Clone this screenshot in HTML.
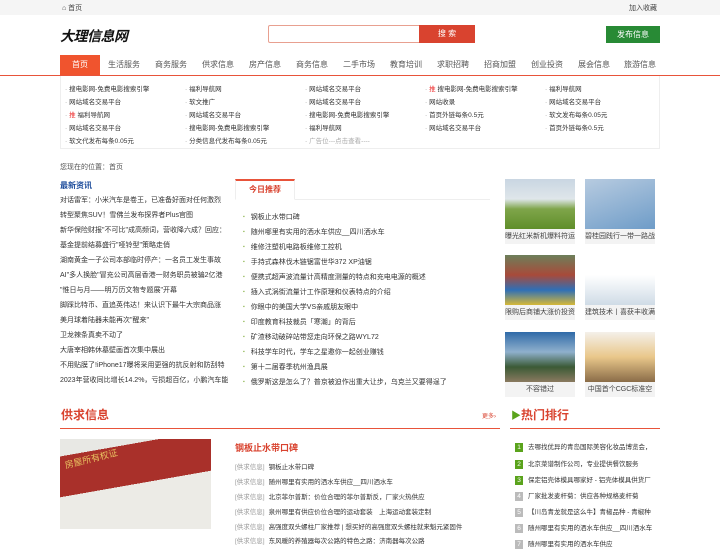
<!DOCTYPE html>
<html><head><meta charset="utf-8"><style>
*{margin:0;padding:0;box-sizing:border-box}
body{width:720px;height:540px;overflow:hidden;background:#fff;font-family:"Liberation Sans","Noto Sans CJK SC",sans-serif;color:#333;font-size:7px;position:relative}
.a{position:absolute;white-space:nowrap}
.top{position:absolute;left:0;top:0;width:720px;height:15px;background:#f5f5f5}
.nav span{position:absolute;top:55px;height:20px;line-height:20px;font-size:8px;color:#555}
.lk div{position:absolute;font-size:6.5px;color:#333}
.lk div:before{content:"·";color:#888;margin-right:2px}
.nl div{position:absolute;left:60px;font-size:7px;color:#333;width:168px;overflow:hidden;white-space:nowrap}
.tl div{position:absolute;left:243px;font-size:7px;color:#333;white-space:nowrap}
.tl div:before{content:"▪";color:#8ab34a;font-size:5px;margin-right:6px;vertical-align:1px}
.pic{position:absolute;width:70px;height:50px}
.cap{position:absolute;width:70px;height:15px;background:#f3f3f3;font-size:7px;text-align:center;line-height:15px;overflow:hidden;white-space:nowrap;color:#444}
.gq div{position:absolute;left:235px;font-size:6.5px;color:#333;white-space:nowrap}
.gq i{font-style:normal;color:#999;margin-right:4px}
.hr div{position:absolute;left:515px;font-size:6.5px;color:#333;white-space:nowrap;width:145px;overflow:hidden}
.hr b{display:inline-block;width:8px;height:9px;color:#fff;text-align:center;line-height:9px;margin-right:5px;font-weight:normal;background:#bbb}
.hr b.g{background:#5aa31c}
</style></head><body>
<div class="top"></div>
<div class="a" style="left:62px;top:3px;font-size:7px;color:#444">⌂ 首页</div>
<div class="a" style="left:629px;top:3px;font-size:7px;color:#444">加入收藏</div>
<div class="a" style="left:60px;top:26px;font-size:14px;font-weight:bold;font-style:italic;color:#111;letter-spacing:-0.5px">大理信息网</div>
<div class="a" style="left:268px;top:25px;width:207px;height:18px;border:1px solid #e8a090;border-radius:2px"></div>
<div class="a" style="left:419px;top:25px;width:56px;height:18px;background:#d9432f;color:#fff;font-size:8px;text-align:center;line-height:18px">搜 索</div>
<div class="a" style="left:606px;top:26px;width:54px;height:17px;background:#288a35;color:#fff;font-size:8px;text-align:center;line-height:17px">发布信息</div>
<div class="a" style="left:0;top:75px;width:720px;height:1px;background:#e8533a"></div>
<div class="a" style="left:60px;top:55px;width:40px;height:20px;background:#f0542e"></div>
<div class="nav">
<span style="left:60px;width:40px;text-align:center;color:#fff">首页</span>
<span style="left:108px">生活服务</span><span style="left:155px">商务服务</span><span style="left:202px">供求信息</span><span style="left:249px">房产信息</span><span style="left:296px">商务信息</span><span style="left:343px">二手市场</span><span style="left:390px">教育培训</span><span style="left:437px">求职招聘</span><span style="left:484px">招商加盟</span><span style="left:531px">创业投资</span><span style="left:578px">展会信息</span><span style="left:624px">旅游信息</span>
</div>
<div class="a" style="left:60px;top:76px;width:600px;height:73px;border:1px solid #eee;border-top:none"></div>
<div class="lk">
<div style="left:65px;top:83px">搜电影网-免费电影搜索引擎</div><div style="left:185px;top:83px">福利导航网</div><div style="left:305px;top:83px">网站域名交易平台</div><div style="left:425px;top:83px"><span style="color:#e33">推</span> 搜电影网-免费电影搜索引擎</div><div style="left:545px;top:83px">福利导航网</div>
<div style="left:65px;top:96px">网站域名交易平台</div><div style="left:185px;top:96px">软文推广</div><div style="left:305px;top:96px">网站域名交易平台</div><div style="left:425px;top:96px">网站收录</div><div style="left:545px;top:96px">网站域名交易平台</div>
<div style="left:65px;top:109px"><span style="color:#e33">推</span> 福利导航网</div><div style="left:185px;top:109px">网站域名交易平台</div><div style="left:305px;top:109px">搜电影网-免费电影搜索引擎</div><div style="left:425px;top:109px">首页外链每条0.5元</div><div style="left:545px;top:109px">软文发布每条0.05元</div>
<div style="left:65px;top:122px">网站域名交易平台</div><div style="left:185px;top:122px">搜电影网-免费电影搜索引擎</div><div style="left:305px;top:122px">福利导航网</div><div style="left:425px;top:122px">网站域名交易平台</div><div style="left:545px;top:122px">首页外链每条0.5元</div>
<div style="left:65px;top:135px">软文代发布每条0.05元</div><div style="left:185px;top:135px">分类信息代发布每条0.05元</div><div style="left:305px;top:135px;color:#aaa">广告位---点击查看----</div>
</div>
<div class="a" style="left:60px;top:162px;font-size:7px;color:#555">您现在的位置：首页</div>
<div class="a" style="left:60px;top:180px;font-size:8px;font-weight:bold;color:#1a4a9a">最新资讯</div>
<div class="nl">
<div style="top:195px">对话雷军：小米汽车是卷王，已准备好面对任何激烈</div>
<div style="top:210px">转型聚焦SUV！雪佛兰发布探界者Plus官图</div>
<div style="top:225px">新华保险财报"不可比"成高频词，营收降六成？回应：</div>
<div style="top:240px">基金提前结募盛行"哑铃型"策略走俏</div>
<div style="top:255px">湖南黄金一子公司本部临时停产：一名员工发生事故</div>
<div style="top:270px">AI"多人换脸"冒充公司高层香港一财务职员被骗2亿港</div>
<div style="top:285px">"惟日与月——明万历文物专题展"开幕</div>
<div style="top:300px">脚踩比特币、直追英伟达！来认识下最牛大宗商品涨</div>
<div style="top:315px">美月球着陆器未能再次"醒来"</div>
<div style="top:330px">卫龙辣条真卖不动了</div>
<div style="top:345px">大唐宰相韩休墓壁画首次集中展出</div>
<div style="top:360px">不用贴膜了!iPhone17曝将采用更强的抗反射和防刮特</div>
<div style="top:375px">2023年营收同比增长14.2%，亏损超百亿，小鹏汽车能</div>
</div>
<div class="a" style="left:235px;top:199px;width:255px;height:1px;background:#eee"></div>
<div class="a" style="left:235px;top:179px;width:60px;height:21px;border:1px solid #eee;border-top:2px solid #e8533a;border-bottom:1px solid #fff;background:#fff;color:#d9432f;font-size:8px;font-weight:bold;text-align:center;line-height:18px">今日推荐</div>
<div class="tl">
<div style="top:212px">钢板止水带口碑</div>
<div style="top:227px">随州哪里有实用的洒水车供应__四川洒水车</div>
<div style="top:242px">维修注塑机电路板维修工控机</div>
<div style="top:257px">手持式森林伐木链锯富世华372 XP油锯</div>
<div style="top:272px">便携式超声波流量计高精度测量的特点和充电电源的概述</div>
<div style="top:287px">插入式涡街流量计工作原理和仪表特点的介绍</div>
<div style="top:302px">你眼中的美国大学VS亲戚朋友眼中</div>
<div style="top:317px">印度教育科技裁员「寒潮」的背后</div>
<div style="top:332px">矿渣移动破碎站带您走向环保之路WYL72</div>
<div style="top:347px">科技学车时代，学车之星邀你一起创业赚钱</div>
<div style="top:362px">第十二届春季杭州渔具展</div>
<div style="top:377px">俄罗斯这是怎么了？普京被迫作出重大让步，乌克兰又要得逞了</div>
</div>
<div class="pic" style="left:505px;top:179px;background:linear-gradient(#c9d6e2 0,#dfe6ea 40%,#7fa54a 60%,#5f8e2a 100%)"></div>
<div class="cap" style="left:505px;top:229px">曝光红米新机爆料符运</div>
<div class="pic" style="left:585px;top:179px;background:linear-gradient(160deg,#b7cbe0,#6e9cc8)"></div>
<div class="cap" style="left:585px;top:229px">碧桂园践行一带一路战</div>
<div class="pic" style="left:505px;top:255px;background:linear-gradient(#6d7f5a,#a84a3a 40%,#2f6fb6 70%,#d6b838)"></div>
<div class="cap" style="left:505px;top:305px">限购后商铺大涨价投资</div>
<div class="pic" style="left:585px;top:255px;background:linear-gradient(#fff 40%,#cfdbe6)"></div>
<div class="cap" style="left:585px;top:305px">建筑技术丨喜获丰收满</div>
<div class="pic" style="left:505px;top:332px;background:linear-gradient(#2f6aa8,#8fb0cc 40%,#3b5a36 70%,#8a7a60)"></div>
<div class="cap" style="left:505px;top:382px">不容错过</div>
<div class="pic" style="left:585px;top:332px;background:linear-gradient(#f4f0ea,#e9c78a 50%,#8a6c48)"></div>
<div class="cap" style="left:585px;top:382px">中国首个CGC标准空</div>
<div class="a" style="left:61px;top:406px;font-size:12px;font-weight:bold;color:#d9432f">供求信息</div>
<div class="a" style="left:482px;top:411px;font-size:6px;color:#d9432f">更多›</div>
<div class="a" style="left:60px;top:428px;width:440px;height:1px;background:#e8533a"></div>
<div class="a" style="left:511px;top:406px;font-size:12px;font-weight:bold;color:#d9432f"><span style="color:#5aa31c;font-size:10px">▶</span>热门排行</div>
<div class="a" style="left:510px;top:428px;width:150px;height:1px;background:#e8533a"></div>
<div class="a" style="left:60px;top:439px;width:151px;height:90px;background:linear-gradient(170deg,#e8e8e4 0 15%,#a9302a 15% 50%,#ecebe6 50%)"></div>
<div class="a" style="left:64px;top:452px;font-size:9px;color:#e8c060;transform:rotate(-14deg)">房屋所有权证</div>
<div class="a" style="left:235px;top:441px;font-size:9px;font-weight:bold;color:#d9432f">钢板止水带口碑</div>
<div class="gq">
<div style="top:461px"><i>[供求信息]</i>钢板止水带口碑</div>
<div style="top:476px"><i>[供求信息]</i>随州哪里有实用的洒水车供应__四川洒水车</div>
<div style="top:491px"><i>[供求信息]</i>北京菲尔普斯：价位合理的菲尔普斯反，厂家火热供应</div>
<div style="top:506px"><i>[供求信息]</i>泉州哪里有供应价位合理的运动套装　上海运动套装定制</div>
<div style="top:521px"><i>[供求信息]</i>高强度双头螺柱厂家推荐 | 想买好的高强度双头螺柱就来魁元紧固件</div>
<div style="top:535px"><i>[供求信息]</i>东风暖的养殖器每次公路的特色之路：济南器每次公路</div>
</div>
<div class="hr">
<div style="top:441px"><b class="g">1</b>去哪找优异的青岛国际美容化妆品博览会，</div>
<div style="top:458px"><b class="g">2</b>北京菜谱制作公司，专业提供餐饮服务</div>
<div style="top:474px"><b class="g">3</b>保定铝壳体模具哪家好 - 铝壳体模具供货厂</div>
<div style="top:490px"><b>4</b>厂家批发麦杆菊：供应各种规格麦杆菊</div>
<div style="top:506px"><b>5</b>【川岛青龙就是这么牛】青椒品种 - 青椒种</div>
<div style="top:522px"><b>6</b>随州哪里有实用的洒水车供应__四川洒水车</div>
<div style="top:538px"><b>7</b>随州哪里有实用的洒水车供应</div>
</div>
</body></html>
